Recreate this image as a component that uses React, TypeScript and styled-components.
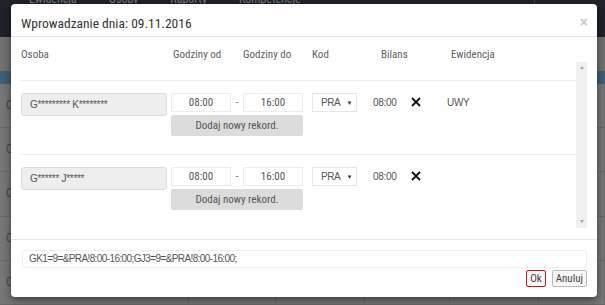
import React from "react";
import styled, { createGlobalStyle } from "styled-components";

const FONT = `Roboto, "Liberation Sans", sans-serif`;

const GlobalStyle = createGlobalStyle`
  html, body { margin: 0; padding: 0; }
  body {
    width: 605px;
    height: 305px;
    overflow: hidden;
    background: #737373;
    font-family: ${FONT};
    font-stretch: 85%;
  }
  * { box-sizing: border-box; }
`;

/* ---------- dimmed page behind the dialog ---------- */
const Page = styled.div`
  position: relative;
  width: 605px;
  height: 305px;
  overflow: hidden;
  display: flex;
  flex-direction: column;
`;

const NavBar = styled.div`
  height: 37px;
  background: #1f2329;
  display: flex;
  align-items: flex-start;
  padding-left: 29px;
  gap: 32px;
`;

const NavTab = styled.span`
  color: #7a7e84;
  font-size: 12px;
  line-height: 12px;
  margin-top: -7px;
`;

const NavDivider = styled.div`
  margin-left: auto;
  margin-right: 70px;
  width: 1px;
  height: 37px;
  background: #3a3f46;
`;

const SubBar = styled.div`
  height: 35px;
  background: #717171;
`;

const BlueBand = styled.div`
  height: 14px;
  background: #3f5f78;
`;

const BgRow = styled.div`
  height: 46px;
  display: grid;
  grid-template-columns: 189px 87px 89px 85px 89px 1fr;
  border-bottom: 1px solid #686868;
  background: #777777;
`;

const BgCell = styled.div`
  border-right: 1px solid #6a6a6a;
  color: #4a4a4a;
  font-size: 12px;
  padding: 14px 0 0 6px;
`;

/* ---------- dialog ---------- */
const Modal = styled.div`
  position: absolute;
  left: 11px;
  top: 4px;
  width: 586px;
  height: 293px;
  background: #ffffff;
  border-radius: 4px;
  box-shadow: 0 3px 9px rgba(0, 0, 0, 0.5);
  display: flex;
  flex-direction: column;
  overflow: hidden;
`;

const Header = styled.div`
  height: 34px;
  border-bottom: 1px solid #e8e8e8;
  display: flex;
  align-items: center;
  justify-content: space-between;
  padding: 0 9px 0 10px;
`;

const Title = styled.h4`
  margin: 0;
  font-family: ${FONT};
  font-weight: 400;
  font-size: 13.5px;
  color: #333333;
  line-height: 18px;
  padding-top: 5px;
`;

const CloseButton = styled.button`
  border: 0;
  background: transparent;
  padding: 0;
  font-family: "Liberation Sans", sans-serif;
  font-weight: 700;
  font-size: 14px;
  color: #c8c8c8;
  line-height: 14px;
  margin-top: 3px;
`;

const Body = styled.div`
  padding: 0 10px;
  display: flex;
  flex-direction: column;
`;

const ColumnHeads = styled.div`
  height: 25px;
  padding-top: 11px;
  display: flex;
`;

const ColumnHead = styled.span<{ $w?: number }>`
  ${(p) => (p.$w ? `width: ${p.$w}px;` : "flex: 1;")}
  flex-shrink: 0;
  font-size: 11px;
  line-height: 14px;
  color: #606060;
`;

const ScrollArea = styled.div`
  height: 166px;
  display: flex;
`;

const ScrollContent = styled.div`
  flex: 1;
  padding-top: 18px;
  overflow: hidden;
`;

const FakeScrollbar = styled.div`
  width: 11px;
  background: #f0f0f0;
  display: flex;
  flex-direction: column;
  justify-content: space-between;
  align-items: center;
  padding: 4px 0 5px;
`;

const Arrow = styled.span<{ $down?: boolean }>`
  width: 0;
  height: 0;
  border-left: 2.5px solid transparent;
  border-right: 2.5px solid transparent;
  ${(p) =>
    p.$down
      ? "border-top: 3px solid #a3a3a3;"
      : "border-bottom: 3px solid #a3a3a3;"}
`;

const Row = styled.div`
  border-top: 1px solid #ededed;
  padding: 12px 0 18px;
  display: flex;
  align-items: flex-start;
  height: 74px;
`;

const Cell = styled.div<{ $w: number }>`
  width: ${(p) => p.$w}px;
  flex-shrink: 0;
  display: flex;
  flex-direction: column;
`;

const PersonBox = styled.div`
  width: 146px;
  height: 23px;
  background: #eeeeee;
  border: 1px solid #dddddd;
  border-radius: 3px;
  padding-left: 8px;
  font-family: "Liberation Sans", sans-serif;
  font-size: 10px;
  letter-spacing: -0.3px;
  line-height: 21px;
  color: #555555;
`;

const TimeLine = styled.div`
  display: flex;
  align-items: center;
  height: 19px;
`;

const TimeInput = styled.div`
  width: 60px;
  height: 19px;
  border: 1px solid #ececec;
  text-align: center;
  font-size: 11px;
  line-height: 17px;
  color: #555555;
`;

const Dash = styled.span`
  width: 12px;
  text-align: center;
  font-size: 11px;
  color: #666666;
`;

const AddButton = styled.button`
  margin-top: 3px;
  width: 132px;
  height: 21px;
  border: 0;
  border-radius: 2px;
  background: #dcdcdc;
  font-family: ${FONT};
  font-stretch: 85%;
  font-size: 11px;
  color: #555555;
  padding: 0;
`;

const SelectBox = styled.div`
  width: 45px;
  height: 19px;
  border: 1px solid #e6e6e6;
  display: flex;
  align-items: center;
  justify-content: space-between;
  padding: 0 4px 0 8px;
  font-family: "Liberation Sans", sans-serif;
  font-size: 10px;
  letter-spacing: -0.4px;
  color: #555555;
`;

const Caret = styled.span`
  font-size: 6px;
  color: #333333;
`;

const Value = styled.span`
  height: 19px;
  line-height: 19px;
  font-family: "Liberation Sans", sans-serif;
  font-size: 10px;
  letter-spacing: -0.3px;
  color: #555555;
`;

const DeleteIcon = styled.svg`
  margin-top: 4px;
  width: 10px;
  height: 10px;
`;

const Footer = styled.div`
  margin-top: 11px;
  border-top: 1px solid #e8e8e8;
  padding: 10px 10px 10px 11px;
  display: flex;
  flex-direction: column;
  align-items: flex-end;
  gap: 2px;
`;

const ResultField = styled.div`
  width: 100%;
  height: 18px;
  border: 1px solid #efefef;
  border-radius: 3px;
  padding-left: 6px;
  font-family: "Liberation Sans", sans-serif;
  font-size: 10px;
  letter-spacing: -0.6px;
  line-height: 16px;
  color: #555555;
`;

const Buttons = styled.div`
  display: flex;
  gap: 6px;
`;

const DialogButton = styled.button<{ $primary?: boolean }>`
  height: 17px;
  padding: 0 3px;
  border-radius: 2px;
  border: ${(p) => (p.$primary ? "1.5px solid #c4161c" : "1px solid #b9b9b9")};
  background: #f7f7f7;
  font-family: ${FONT};
  font-stretch: 85%;
  font-size: 11px;
  line-height: 14px;
  color: #444444;
`;

type Entry = { person: string; from: string; to: string; code: string; balance: string; ev: string };

const entries: Entry[] = [
  { person: "G********* K********", from: "08:00", to: "16:00", code: "PRA", balance: "08:00", ev: "UWY" },
  { person: "G****** J*****", from: "08:00", to: "16:00", code: "PRA", balance: "08:00", ev: "" },
];

const EntryRow = ({ e }: { e: Entry }) => (
  <Row>
    <Cell $w={150}>
      <PersonBox>{e.person}</PersonBox>
    </Cell>
    <Cell $w={141}>
      <TimeLine>
        <TimeInput>{e.from}</TimeInput>
        <Dash>-</Dash>
        <TimeInput>{e.to}</TimeInput>
      </TimeLine>
      <AddButton>Dodaj nowy rekord.</AddButton>
    </Cell>
    <Cell $w={61}>
      <SelectBox>
        {e.code}
        <Caret>▼</Caret>
      </SelectBox>
    </Cell>
    <Cell $w={38}>
      <Value>{e.balance}</Value>
    </Cell>
    <Cell $w={36}>
      <DeleteIcon viewBox="0 0 10 10">
        <path d="M1 1 L9 9 M9 1 L1 9" stroke="#111" strokeWidth="1.8" />
      </DeleteIcon>
    </Cell>
    <Cell $w={60}>
      <Value>{e.ev}</Value>
    </Cell>
  </Row>
);

export default function App() {
  return (
    <>
      <GlobalStyle />
      <Page>
        <NavBar>
          <NavTab>Ewidencja</NavTab>
          <NavTab>Osoby</NavTab>
          <NavTab>Raporty</NavTab>
          <NavTab>Kompetencje</NavTab>
          <NavDivider />
        </NavBar>
        <SubBar />
        <BlueBand />
        {[0, 1, 2, 3, 4].map((i) => (
          <BgRow key={i}>
            <BgCell>C</BgCell>
            <BgCell />
            <BgCell />
            <BgCell />
            <BgCell />
            <BgCell />
          </BgRow>
        ))}

        <Modal>
          <Header>
            <Title>Wprowadzanie dnia: 09.11.2016</Title>
            <CloseButton>×</CloseButton>
          </Header>
          <Body>
            <ColumnHeads>
              <ColumnHead $w={152}>Osoba</ColumnHead>
              <ColumnHead $w={70}>Godziny od</ColumnHead>
              <ColumnHead $w={69}>Godziny do</ColumnHead>
              <ColumnHead $w={69}>Kod</ColumnHead>
              <ColumnHead $w={70}>Bilans</ColumnHead>
              <ColumnHead>Ewidencja</ColumnHead>
            </ColumnHeads>
            <ScrollArea>
              <ScrollContent>
                {entries.map((e, i) => (
                  <EntryRow key={i} e={e} />
                ))}
              </ScrollContent>
              <FakeScrollbar>
                <Arrow />
                <Arrow $down />
              </FakeScrollbar>
            </ScrollArea>
          </Body>
          <Footer>
            <ResultField>GK1=9=&amp;PRA!8:00-16:00;GJ3=9=&amp;PRA!8:00-16:00;</ResultField>
            <Buttons>
              <DialogButton $primary>Ok</DialogButton>
              <DialogButton>Anuluj</DialogButton>
            </Buttons>
          </Footer>
        </Modal>
      </Page>
    </>
  );
}
